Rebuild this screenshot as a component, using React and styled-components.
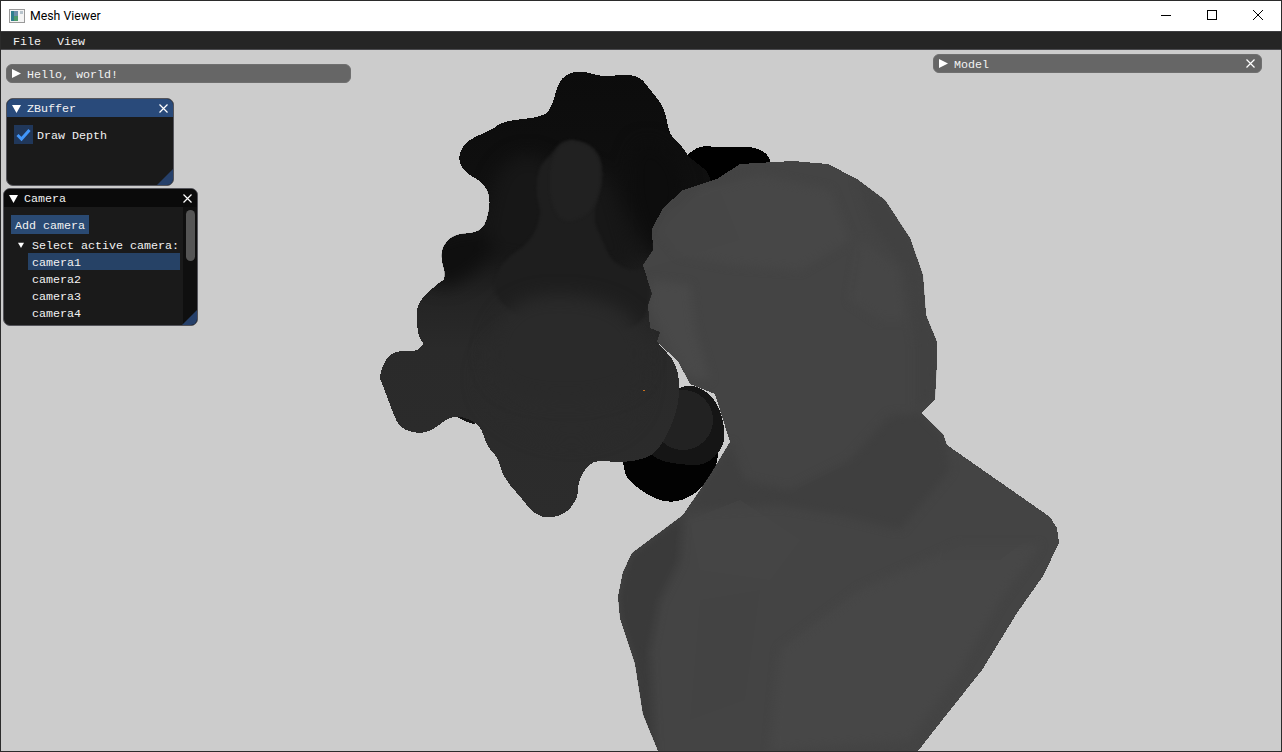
import React from 'react';
import styled, { createGlobalStyle } from 'styled-components';

const GlobalStyle = createGlobalStyle`
  html, body {
    margin: 0;
    padding: 0;
    background: #ccc;
    overflow: hidden;
  }
`;

// turns a list of points into a closed smooth outline
const smooth = (pts) => {
  let d = '';
  pts.forEach((p, i) => {
    const next = pts[(i + 1) % pts.length];
    const mx = (p[0] + next[0]) / 2;
    const my = (p[1] + next[1]) / 2;
    if (i === 0) {
      const last = pts[pts.length - 1];
      d += `M${(last[0] + p[0]) / 2} ${(last[1] + p[1]) / 2} `;
    }
    d += `Q${p[0]} ${p[1]} ${mx} ${my} `;
  });
  return d + 'Z';
};
const poly = (pts) => pts.map((p) => p.join(',')).join(' ');

const blackTop = [[683, 160], [690, 152], [703, 145], [720, 148], [747, 146], [763, 150], [773, 162], [760, 190], [700, 200]];
const blackBottom = [[622, 455], [625, 475], [632, 483], [647, 495], [667, 503], [687, 499], [703, 487], [716, 470], [720, 440], [660, 430]];
const backBlob = [[558, 83], [567, 74], [578, 71], [590, 73], [605, 77], [625, 74], [640, 77], [648, 87], [665, 108], [669, 135], [683, 147], [688, 157], [717, 178], [700, 240], [690, 340], [560, 360], [430, 320], [447, 277], [441, 260], [443, 245], [455, 234], [477, 233], [487, 223], [491, 195], [480, 180], [465, 173], [457, 157], [467, 140], [492, 130], [503, 121], [543, 117], [552, 107]];
const leftFold = [[447, 277], [430, 290], [418, 303], [416, 317], [420, 347], [480, 380], [640, 340], [640, 290], [540, 262], [490, 257], [470, 270]];
const midCloud = [[488, 200], [500, 165], [530, 150], [560, 170], [610, 170], [625, 230], [640, 272], [600, 265], [510, 262], [480, 250]];
const bump = [[550, 156], [560, 142], [575, 139], [595, 147], [603, 165], [602, 188], [592, 217], [602, 240], [612, 262], [632, 272], [648, 266], [650, 330], [560, 340], [490, 300], [500, 262], [530, 243], [542, 215], [535, 190], [540, 165]];
const lowerShade = [[640, 430], [650, 459], [690, 466], [710, 463], [728, 440], [716, 395], [680, 380]];
const frontBlob = [[379, 377], [387, 355], [403, 350], [417, 352], [430, 337], [430, 318], [470, 286], [490, 258], [560, 270], [600, 288], [640, 285], [650, 327], [657, 343], [677, 363], [680, 393], [675, 417], [663, 443], [650, 458], [620, 463], [600, 460], [587, 465], [578, 483], [578, 497], [567, 513], [548, 519], [533, 513], [523, 500], [503, 477], [498, 457], [487, 447], [480, 423], [453, 414], [433, 430], [418, 434], [400, 428], [393, 413], [382, 383]];

const bustOutline = [[740, 164], [793, 161], [828, 164], [857, 179], [885, 200], [910, 238], [923, 275], [926, 315], [937, 342], [937, 361], [935, 399], [921, 413], [943, 434], [947, 445], [1050, 517], [1057, 528], [1059, 543], [1043, 576], [1017, 613], [982, 670], [947, 714], [918, 751], [658, 751], [643, 714], [635, 664], [620, 618], [618, 597], [623, 572], [632, 553], [683, 515], [700, 490], [710, 475], [730, 442], [715, 394], [690, 384], [678, 361], [657, 342], [660, 332], [650, 328], [648, 305], [652, 294], [643, 265], [653, 250], [652, 229], [663, 208], [683, 190], [717, 179]];

// soft shading on the bust, [shade, points]
const bustShades = [
  ['#3f3f3f', [[730, 442], [745, 480], [790, 490], [850, 460], [890, 415], [921, 413], [943, 434], [950, 470], [900, 530], [840, 515], [780, 505], [700, 510], [683, 515], [700, 490], [710, 475]]],
  ['#3a3a3a', [[620, 618], [618, 597], [623, 572], [632, 553], [683, 515], [680, 560], [660, 600], [650, 650], [655, 751], [640, 751], [635, 664]]],
  ['#474747', [[660, 230], [700, 190], [760, 175], [830, 190], [850, 240], [800, 270], [730, 265], [680, 255]]],
  ['#494949', [[648, 305], [652, 280], [690, 285], [695, 330], [710, 380], [690, 378], [670, 350]]],
  ['#414141', [[857, 179], [885, 200], [910, 238], [923, 275], [926, 315], [937, 342], [937, 361], [935, 399], [915, 410], [915, 345], [905, 270], [870, 220]]],
  ['#464646', [[860, 240], [900, 270], [905, 320], [880, 320], [850, 300]]],
  ['#474747', [[1040, 545], [1000, 600], [960, 670], [910, 740], [770, 751], [780, 650], [860, 590], [960, 545]]],
];

const bustFacets = [
  ['#454545', [[690, 520], [740, 500], [800, 540], [770, 580], [700, 570]]],
  ['#424242', [[700, 600], [760, 590], [745, 700], [690, 720]]],
  ['#454545', [[640, 270], [740, 240], [720, 190], [668, 210]]],
  ['#434343', [[740, 300], [800, 300], [830, 370], [790, 430], [745, 440]]],
  ['#434343', [[960, 480], [1040, 530], [1000, 560], [940, 560]]],
];

const Frame = styled.div`
  box-sizing: border-box;
  width: 1282px;
  height: 752px;
  border: 1px solid #2b2b2b;
  display: flex;
  flex-direction: column;
  background: #ccc;
`;

const TitleBar = styled.div`
  height: 30px;
  background: #fff;
  display: flex;
  align-items: center;
  padding-left: 8px;
  flex: none;
`;

const AppIcon = styled.svg`
  width: 16px;
  height: 16px;
  flex: none;
  margin-bottom: 1px;
`;

const TitleText = styled.span`
  margin-left: 5px;
  margin-bottom: 1px;
  font: 12.3px Roboto, "Open Sans", sans-serif;
  color: #000;
`;

const WindowControls = styled.div`
  margin-left: auto;
  display: flex;
  height: 100%;
  box-sizing: border-box;
  padding-bottom: 2px;
`;

const ControlButton = styled.div`
  width: 46px;
  display: flex;
  align-items: center;
  justify-content: center;
  svg {
    width: 12px;
    height: 12px;
    stroke: #000;
    fill: none;
  }
`;

const MenuBar = styled.div`
  box-sizing: border-box;
  height: 19px;
  flex: none;
  background: #252525;
  border-top: 1px solid #3d3d40;
  border-bottom: 1px solid #4a4a4e;
  display: flex;
  align-items: center;
  padding-left: 12px;
  gap: 16px;
`;

const MonoText = styled.span`
  font: 11.67px/12px "Liberation Mono", "DejaVu Sans Mono", monospace;
  color: #f2f2f2;
  white-space: pre;
  padding-top: 2px;
`;

const Canvas = styled.main`
  position: relative;
  flex: 1;
  overflow: hidden;
  background: #ccc;
`;

const MeshSvg = styled.svg`
  position: absolute;
  left: 0;
  top: 0;
  width: 1280px;
  height: 701px;
`;

const CollapsedBar = styled.div`
  position: absolute;
  left: ${(p) => p.$x}px;
  top: ${(p) => p.$y}px;
  width: ${(p) => p.$w}px;
  box-sizing: border-box;
  height: 19px;
  background: #666;
  border: 1px solid #6f6f6f;
  border-radius: 6px;
  display: flex;
  align-items: center;
  padding: 0 5px;
`;

const ImWindow = styled.section`
  position: absolute;
  left: ${(p) => p.$x}px;
  top: ${(p) => p.$y}px;
  width: ${(p) => p.$w}px;
  height: ${(p) => p.$h}px;
  box-sizing: border-box;
  background: #1a1a1a;
  border: 1px solid #54545a;
  border-radius: 7px;
  overflow: hidden;
  display: flex;
  flex-direction: column;
`;

const ImTitle = styled.header`
  height: 18px;
  flex: none;
  background: ${(p) => (p.$active ? '#294a7a' : '#0a0a0a')};
  display: flex;
  align-items: center;
  padding: 0 4px 0 5px;
`;

const Arrow = styled.svg`
  width: ${(p) => p.$size || 9}px;
  height: ${(p) => p.$size || 9}px;
  fill: #fff;
  flex: none;
  margin-right: ${(p) => p.$gap ?? 6}px;
`;

const CloseIcon = styled.svg`
  width: 9px;
  height: 9px;
  stroke: #fff;
  stroke-width: 1.2;
  margin-left: auto;
  margin-right: 1px;
  flex: none;
`;

const Grip = styled.div`
  position: absolute;
  right: 0;
  bottom: 0;
  width: ${(p) => p.$size}px;
  height: ${(p) => p.$size}px;
  background: #26406a;
  clip-path: polygon(100% 0, 100% 100%, 0 100%);
`;

const CheckRow = styled.div`
  display: flex;
  align-items: center;
  gap: 4px;
  padding: 8px 0 0 7px;
`;

const CheckBox = styled.div`
  width: 19px;
  height: 19px;
  background: #20375a;
  display: flex;
  align-items: center;
  justify-content: center;
  svg {
    width: 15px;
    height: 15px;
    fill: none;
    stroke: #4296fa;
    stroke-width: 3;
  }
`;

const CameraBody = styled.div`
  flex: 1;
  display: flex;
  min-height: 0;
`;

const CameraContent = styled.div`
  flex: 1;
  padding: 8px 2px 0 7px;
  display: flex;
  flex-direction: column;
  align-items: flex-start;
  overflow: hidden;
`;

const AddButton = styled.div`
  width: 78px;
  height: 19px;
  flex: none;
  background: #2a4a73;
  display: flex;
  align-items: center;
  justify-content: center;
`;

const TreeHeader = styled.div`
  margin-top: 3px;
  height: 16px;
  display: flex;
  align-items: center;
  padding-left: 7px;
  flex: none;
`;

const CameraItem = styled.div`
  box-sizing: border-box;
  flex: none;
  width: 152px;
  height: 17px;
  margin-left: 17px;
  padding-left: 4px;
  display: flex;
  align-items: center;
  background: ${(p) => (p.$selected ? '#264266' : 'transparent')};
`;

const ScrollTrack = styled.div`
  width: 14px;
  flex: none;
  background: #0f0f0f;
  padding: 3px 2px 0 3px;
  box-sizing: border-box;
`;

const ScrollGrab = styled.div`
  height: 51px;
  background: #555;
  border-radius: 5px;
`;

const DownArrow = ({ size, gap }) => (
  <Arrow $size={size} $gap={gap} viewBox="0 0 9 9"><path d="M0 1h9L4.5 9z" /></Arrow>
);
const RightArrow = () => (
  <Arrow viewBox="0 0 9 9"><path d="M0 0l9 4.5L0 9z" /></Arrow>
);
const Close = () => (
  <CloseIcon viewBox="0 0 9 9"><path d="M0.5 0.5l8 8M8.5 0.5l-8 8" /></CloseIcon>
);

const cameras = ['camera1', 'camera2', 'camera3', 'camera4'];

const Mesh = () => (
  <MeshSvg viewBox="1 50 1280 701" shapeRendering="crispEdges">
    <defs>
      <linearGradient id="depth" gradientUnits="userSpaceOnUse" x1="0" y1="70" x2="0" y2="520">
        <stop offset="0" stopColor="#0c0c0c" />
        <stop offset="0.29" stopColor="#101010" />
        <stop offset="0.4" stopColor="#171717" />
        <stop offset="0.51" stopColor="#242424" />
        <stop offset="0.62" stopColor="#2a2a2a" />
        <stop offset="1" stopColor="#2c2c2c" />
      </linearGradient>
      <filter id="soft" x="-30%" y="-30%" width="160%" height="160%" colorInterpolationFilters="sRGB">
        <feGaussianBlur stdDeviation="9" />
      </filter>
      <filter id="softer" x="-30%" y="-30%" width="160%" height="160%" colorInterpolationFilters="sRGB">
        <feGaussianBlur stdDeviation="4" />
      </filter>
      <filter id="edge" x="-30%" y="-30%" width="160%" height="160%" colorInterpolationFilters="sRGB">
        <feGaussianBlur stdDeviation="1.5" />
      </filter>
      <clipPath id="blobClip">
        <path d={smooth(backBlob)} />
        <path d={smooth(leftFold)} />
        <path d={smooth(frontBlob)} />
      </clipPath>
      <clipPath id="bustClip">
        <polygon points={poly(bustOutline)} />
      </clipPath>
    </defs>
    <path d={smooth(blackTop)} fill="#000" />
    <path d={smooth(blackBottom)} fill="#020202" />
    <path d={smooth(lowerShade)} fill="#151515" />
    <circle cx="683" cy="420" r="30" fill="#222" />
    <path d={smooth([[450, 412], [465, 422], [480, 425], [478, 405]])} fill="#141414" />
    <path d={smooth(backBlob)} fill="url(#depth)" />
    <path d={smooth(leftFold)} fill="url(#depth)" />
    <path d={smooth(frontBlob)} fill="url(#depth)" />
    <g clipPath="url(#blobClip)">
      <g filter="url(#soft)">
        <path d={smooth(midCloud)} fill="#171717" />
        <path d={smooth([[425, 240], [480, 225], [500, 250], [450, 290], [425, 280]])} fill="#0f0f0f" />
        <path d={smooth([[640, 130], [690, 170], [670, 260], [645, 250], [625, 180]])} fill="#0d0d0d" />
        <path d={smooth([[500, 320], [640, 310], [650, 420], [560, 450], [470, 400]])} fill="#2b2b2b" />
      </g>
      <g filter="url(#edge)">
        <path d={smooth(bump)} fill="#1e1e1e" />
      </g>
      <g filter="url(#soft)">
        <path d={smooth([[500, 290], [640, 300], [650, 400], [480, 400]])} fill="#2a2a2a" />
      </g>
      <g filter="url(#edge)">
        <path d={smooth([[552, 158], [562, 143], [575, 140], [593, 148], [601, 165], [600, 190], [590, 215], [560, 225], [548, 190]])} fill="#212121" />
      </g>
    </g>
    <polygon points={poly(bustOutline)} fill="#444" />
    <g clipPath="url(#bustClip)">
      <g filter="url(#softer)">
        {bustShades.map(([shade, pts], i) => (
          <polygon key={i} points={poly(pts)} fill={shade} />
        ))}
      </g>
      {bustFacets.map(([shade, pts], i) => (
        <polygon key={i} points={poly(pts)} fill={shade} opacity="0.5" />
      ))}
    </g>
    <rect x="643" y="390" width="2" height="1" fill="#c8701e" />
  </MeshSvg>
);

export default function App() {
  return (
    <>
      <GlobalStyle />
      <Frame>
        <TitleBar>
          <AppIcon viewBox="0 0 16 16">
            <rect x="0.5" y="1.5" width="15" height="13" fill="#f4f4f4" stroke="#9a9a9a" />
            <rect x="2" y="3" width="3" height="10" fill="#2f7f8c" />
            <rect x="5" y="3" width="4" height="5" fill="#6c8fa8" />
            <rect x="5" y="8" width="4" height="5" fill="#4f9a6a" />
            <rect x="11" y="3" width="3" height="3" fill="#b8c4cc" />
          </AppIcon>
          <TitleText>Mesh Viewer</TitleText>
          <WindowControls>
            <ControlButton><svg viewBox="0 0 12 12"><path d="M1 6.5h10" /></svg></ControlButton>
            <ControlButton><svg viewBox="0 0 12 12"><rect x="1.5" y="1.5" width="9" height="9" /></svg></ControlButton>
            <ControlButton><svg viewBox="0 0 12 12"><path d="M1 1l10 10M11 1L1 11" /></svg></ControlButton>
          </WindowControls>
        </TitleBar>
        <MenuBar>
          <MonoText>File</MonoText>
          <MonoText>View</MonoText>
        </MenuBar>
        <Canvas>
          <Mesh />
          <CollapsedBar $x={5} $y={14} $w={345}>
            <RightArrow />
            <MonoText>Hello, world!</MonoText>
          </CollapsedBar>
          <CollapsedBar $x={932} $y={4} $w={329}>
            <RightArrow />
            <MonoText>Model</MonoText>
            <Close />
          </CollapsedBar>
          <ImWindow $x={5} $y={48} $w={168} $h={88}>
            <ImTitle $active>
              <DownArrow />
              <MonoText>ZBuffer</MonoText>
              <Close />
            </ImTitle>
            <CheckRow>
              <CheckBox>
                <svg viewBox="0 0 15 15"><path d="M1.5 8l4 4L13.5 3" /></svg>
              </CheckBox>
              <MonoText>Draw Depth</MonoText>
            </CheckRow>
            <Grip $size={16} />
          </ImWindow>
          <ImWindow $x={2} $y={138} $w={195} $h={138}>
            <ImTitle>
              <DownArrow />
              <MonoText>Camera</MonoText>
              <Close />
            </ImTitle>
            <CameraBody>
              <CameraContent>
                <AddButton><MonoText>Add camera</MonoText></AddButton>
                <TreeHeader>
                  <DownArrow size={6} gap={8} />
                  <MonoText>Select active camera:</MonoText>
                </TreeHeader>
                {cameras.map((name, i) => (
                  <CameraItem key={name} $selected={i === 0}>
                    <MonoText>{name}</MonoText>
                  </CameraItem>
                ))}
              </CameraContent>
              <ScrollTrack><ScrollGrab /></ScrollTrack>
            </CameraBody>
            <Grip $size={15} />
          </ImWindow>
        </Canvas>
      </Frame>
    </>
  );
}
